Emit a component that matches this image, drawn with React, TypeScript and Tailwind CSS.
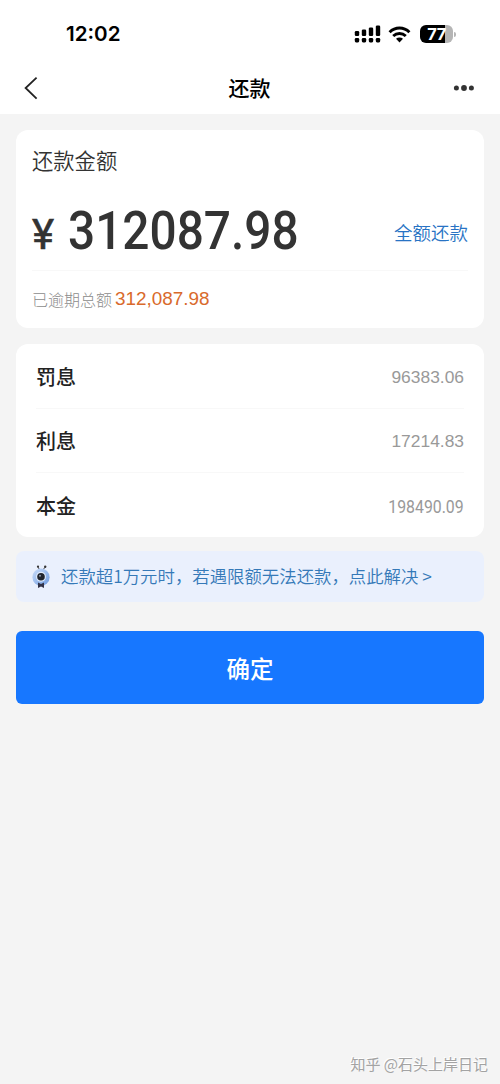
import { clsx } from "clsx";

const signalBars = [5, 6.5, 8.5, 10.5];

const details = [
  { label: "罚息", value: "96383.06" },
  { label: "利息", value: "17214.83" },
  { label: "本金", value: "198490.09", narrow: true }
];

function StatusBar() {
  return (
    <div className="flex h-[62px] items-center pt-[6px] pr-[44px] pl-[66px]">
      <span className="font-['Inter',sans-serif] text-[20.6px] leading-6 font-semibold text-black">
        12:02
      </span>

      {/* Dual SIM signal */}
      <svg className="ml-auto" width="27" height="18" viewBox="0 0 27 18" fill="#000">
        {signalBars.map((h, i) => (
          <g key={h}>
            <rect x={0.8 + i * 7} y={11 - h} width="4.4" height={h} rx="1.3" />
            <rect x={0.8 + i * 7} y="13" width="4.4" height="4.4" rx="1.3" />
          </g>
        ))}
      </svg>

      <svg className="ml-[7px]" width="23" height="17" viewBox="0 0 23 17" fill="none">
        <path d="M1.6 6.2C7.2 0.7 15.8 0.7 21.4 6.2" stroke="#000" strokeWidth="3" />
        <path d="M5.2 10C8.8 6.6 14.2 6.6 17.8 10" stroke="#000" strokeWidth="2.9" />
        <path d="M8 12.8C10 11 13 11 15 12.8L11.5 16.4Z" fill="#000" />
      </svg>

      <div className="ml-[9px] flex items-center">
        <div className="flex h-[18px] w-[33px] items-center justify-center rounded-[6px] bg-[linear-gradient(90deg,#000_76%,#b5b5b5_76%)] font-['Inter',sans-serif] text-[16.5px] leading-none font-bold tracking-[-0.4px] text-white">
          77
        </div>
        <div className="ml-[1px] h-[5px] w-[2px] rounded-r-full bg-[#b5b5b5]" />
      </div>
    </div>
  );
}

function NavBar() {
  return (
    <div className="grid h-[52px] grid-cols-3 items-center pr-[25px] pl-[24px]">
      <svg width="14" height="24" viewBox="0 0 14 24" fill="none">
        <path d="M12.6 1.6L1.6 12L12.6 22.6" stroke="#222" strokeWidth="1.8" />
      </svg>
      <h1 className="pb-[2px] text-center text-[21px] leading-[30px] font-medium text-black">还款</h1>
      <svg className="justify-self-end" width="22" height="8" viewBox="0 0 22 8" fill="#333">
        <circle cx="3.4" cy="4" r="2.5" />
        <circle cx="11" cy="4" r="2.9" />
        <circle cx="18.4" cy="4" r="2.5" />
      </svg>
    </div>
  );
}

function Mascot() {
  return (
    <svg width="18" height="24" viewBox="0 0 18 24" fill="none">
      <defs>
        <linearGradient id="body" x1="0" y1="0" x2="1" y2="1">
          <stop offset="0" stopColor="#c9dcfa" />
          <stop offset="1" stopColor="#6f9ce0" />
        </linearGradient>
      </defs>
      <path d="M7.6 5L6.2 2.2M11 5L12.8 2.4" stroke="#4a4a55" strokeWidth="1" />
      <circle cx="6" cy="1.7" r="1.1" fill="#333" />
      <circle cx="13.2" cy="1.8" r="1.2" fill="#333" />
      <circle cx="9" cy="12.2" r="8.6" fill="url(#body)" />
      <circle cx="9" cy="11.8" r="5" fill="#dfeafb" />
      <circle cx="9" cy="11.8" r="3.8" fill="#20242e" />
      <circle cx="8" cy="10.8" r="1" fill="#8c98ad" />
      <path d="M6 17.6L9 19L12 17.6V23L9 21.6L6 23Z" fill="#333348" />
    </svg>
  );
}

function AmountCard() {
  return (
    <section className="h-[198px] rounded-xl bg-white px-4">
      <h2 className="pt-[14px] pb-px text-[21.3px] leading-8 font-[350] text-[#333]">还款金额</h2>

      <div className="flex h-[94px] items-center justify-between border-b border-[#f8f8f8]">
        <div className="flex items-baseline pt-[19px] font-['Roboto',sans-serif] font-medium text-[#333]">
          <span className="w-[36px] text-[42px] leading-[60px] font-normal [-webkit-text-stroke:0.6px_#333]">
            ¥
          </span>
          <span className="w-[236px] origin-left scale-x-[0.885] text-[54px] leading-[60px]">
            312087.98
          </span>
        </div>
        <button className="pt-[17px] text-[18.5px] leading-7 font-[350] text-[#2873c4]">
          全额还款
        </button>
      </div>

      <p className="flex h-[56px] items-center text-[16px] font-light text-[#8c8c8c]">
        已逾期总额
        <span className="mt-px ml-[3px] font-['Liberation_Sans',sans-serif] text-[18.9px] font-normal text-[#d96a2b]">
          312,087.98
        </span>
      </p>
    </section>
  );
}

function DetailsCard() {
  return (
    <section className="mt-4 h-[193px] rounded-xl bg-white px-5">
      {details.map((item, i) => (
        <div
          key={item.label}
          className={clsx(
            "flex h-[64.5px] items-center justify-between pt-[2px]",
            i < details.length - 1 && "border-b border-[#f8f8f8]"
          )}
        >
          <span className="text-[20px] leading-7 font-medium text-[#222]">{item.label}</span>
          <span
            className={clsx(
              "text-[#999]",
              item.narrow
                ? "origin-right scale-x-[0.88] font-['Roboto',sans-serif] text-[18px]"
                : "font-['Liberation_Sans',sans-serif] text-[17.4px]"
            )}
          >
            {item.value}
          </span>
        </div>
      ))}
    </section>
  );
}

export default function App() {
  return (
    <div className="flex h-[1084px] w-[500px] flex-col bg-[#f4f4f4] font-['Noto_Sans_CJK_SC',sans-serif]">
      <header className="bg-white">
        <StatusBar />
        <NavBar />
      </header>

      <main className="px-4 pt-4">
        <AmountCard />
        <DetailsCard />

        <a className="mt-[14px] flex h-[51px] items-center rounded-lg bg-[#eaf0fd] pl-4 text-[17.4px] font-[350] whitespace-nowrap text-[#3579b8]">
          <Mascot />
          <span className="ml-[11px]">还款超1万元时，若遇限额无法还款，点此解决 &gt;</span>
        </a>

        <button className="mt-[29px] h-[73px] w-full rounded-md bg-[#1777ff] pt-[2px] text-[23.5px] font-medium text-white">
          确定
        </button>
      </main>

      <footer className="mt-auto pr-[12px] pb-[8px] text-right text-[15px] leading-6 text-[#a3a3a3] [text-shadow:-1px_-1px_0_#fff]">
        知乎 @石头上岸日记
      </footer>
    </div>
  );
}
